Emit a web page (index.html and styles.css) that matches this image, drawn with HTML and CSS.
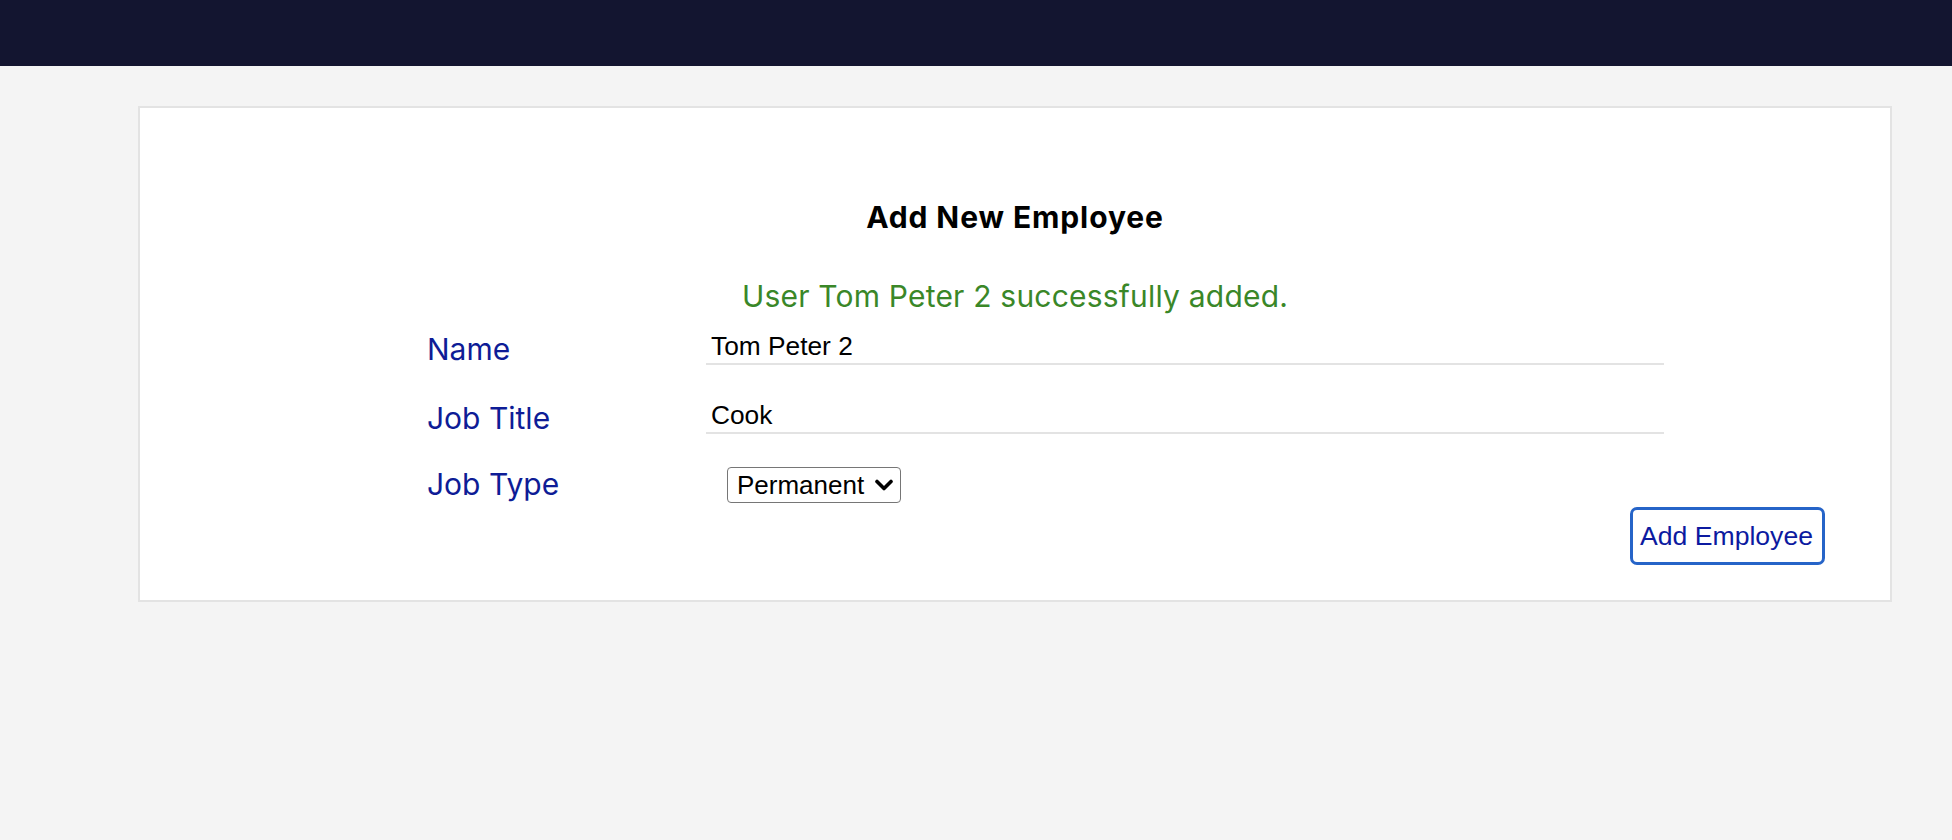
FILE: index.html
```html
<!DOCTYPE html>
<html lang="en">
<head>
<meta charset="utf-8">
<title>Add New Employee</title>
<link rel="stylesheet" href="styles.css">
</head>
<body>
<header class="topbar"></header>
<main class="main">
  <section class="card">
    <h3 class="title">Add New Employee</h3>
    <p class="message">User Tom Peter 2 successfully added.</p>
    <form class="form">
      <div class="row">
        <label class="label" for="name">Name</label>
        <input class="input" id="name" type="text" value="Tom Peter 2">
      </div>
      <div class="row">
        <label class="label" for="title">Job Title</label>
        <input class="input" id="title" type="text" value="Cook">
      </div>
      <div class="row row-select">
        <label class="label" for="type">Job Type</label>
        <div class="select-wrap">
          <select class="select" id="type">
            <option>Permanent</option>
            <option>Contract</option>
          </select>
          <svg class="chevron" width="18" height="12" viewBox="0 0 18 12" aria-hidden="true"><path d="M2 2.5 L9 9.5 L16 2.5" fill="none" stroke="#000" stroke-width="3.6" stroke-linecap="round" stroke-linejoin="round"/></svg>
        </div>
      </div>
      <div class="actions">
        <button class="button" type="button">Add Employee</button>
      </div>
    </form>
  </section>
</main>
</body>
</html>
```

FILE: styles.css
```css
* { box-sizing: border-box; }

body {
  margin: 0;
  background: #f4f4f4;
  font-family: "Liberation Sans", Arial, sans-serif;
}

.topbar {
  height: 66px;
  background: #131530;
}

.main {
  padding: 40px 60px 0 138px;
}

.card {
  background: #fff;
  border: 2px solid #e3e3e3;
  padding: 91px 0 35px 0;
}

.title {
  margin: 0;
  text-align: center;
  font-family: Inter, "Noto Sans", sans-serif;
  font-weight: 700;
  font-size: 30px;
  letter-spacing: 0.9px;
  line-height: 36px;
  color: #000;
}

.message {
  margin: 43px 0 0 0;
  text-align: center;
  font-family: Inter, "Noto Sans", sans-serif;
  font-size: 30px;
  letter-spacing: 0.2px;
  line-height: 36px;
  color: #3a8728;
}

.form {
  margin: 15px 0 0 0;
}

.row {
  display: grid;
  grid-template-columns: 279px 958px;
  align-items: end;
  margin-left: 287px;
}

.row + .row {
  margin-top: 33px;
}

.label {
  font-family: Inter, "Noto Sans", sans-serif;
  font-size: 30px;
  line-height: 32px;
  color: #0e1c96;
}

.input {
  height: 36px;
  width: 100%;
  border: none;
  border-bottom: 2px solid #e3e3e3;
  padding: 0 5px;
  font-family: "Liberation Sans", Arial, sans-serif;
  font-size: 26.3px;
  color: #000;
  background: transparent;
  outline: none;
}

.row-select .label {
  margin-bottom: 3px;
}

.select-wrap {
  position: relative;
  width: 174px;
  height: 36px;
  margin-left: 21px;
}

.select {
  appearance: none;
  -webkit-appearance: none;
  width: 174px;
  height: 36px;
  border: 1px solid #767676;
  border-radius: 4px;
  background: #fff;
  padding: 0 0 0 9px;
  font-family: "Liberation Sans", Arial, sans-serif;
  font-size: 26px;
  color: #000;
}

.chevron {
  position: absolute;
  right: 8px;
  top: 12px;
  pointer-events: none;
}

.actions {
  display: flex;
  justify-content: flex-end;
  margin-top: 4px;
  padding-right: 65px;
}

.button {
  height: 58px;
  border: 3px solid #2664c8;
  border-radius: 7px;
  background: #fff;
  padding: 0 9px 0 7px;
  font-family: "Liberation Sans", Arial, sans-serif;
  font-size: 26.6px;
  color: #0c1aa0;
}
```
